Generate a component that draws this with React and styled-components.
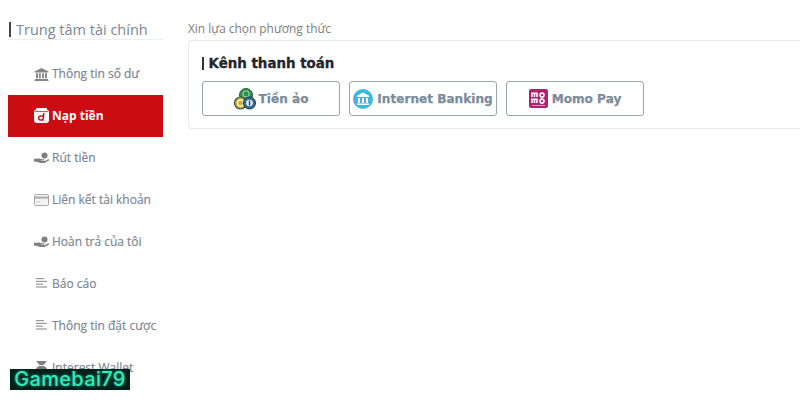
import React from "react";
import styled, { createGlobalStyle } from "styled-components";

const Global = createGlobalStyle`
  html, body { margin: 0; padding: 0; background: #fff; height: 400px; overflow: hidden; }
  body { font-family: "Open Sans", "Noto Sans", sans-serif; }
`;
const Page = styled.div`
  position: relative;
  width: 800px;
  height: 400px;
  overflow: hidden;
  display: flex;
  padding: 19px 0 0 8px;
  box-sizing: border-box;
`;
const Sidebar = styled.aside`
  width: 155px;
  flex: none;
`;
const SideTitle = styled.h2`
  margin: 0 0 13px;
  height: 20px;
  box-sizing: content-box;
  border-bottom: 1px solid #eceef0;
  display: flex;
  align-items: center;
  gap: 5px;
  padding-left: 1px;
  font-size: 14.5px;
  line-height: 19px;
  font-weight: 400;
  color: #7a8793;
  &::before { content: ""; width: 2px; height: 15px; background: #444; }
`;
const Item = styled.div`
  height: 41.9px;
  display: flex;
  align-items: center;
  gap: 3px;
  padding-left: 26px;
  font-size: 12px;
  font-weight: ${p => (p.$active ? 700 : 400)};
  -webkit-text-stroke: ${p => (p.$active ? "0" : "0.2px")};
  white-space: nowrap;
  color: ${p => (p.$active ? "#fff" : "#7d8894")};
  background: ${p => (p.$active ? "#cb0c13" : "transparent")};
  svg { flex: none; }
`;
const Main = styled.main`
  margin-left: 25px;
  padding-top: 1px;
  flex: none;
  width: 640px;
`;
const Label = styled.div`
  height: 20px;
  font-size: 11.9px;
  line-height: 16px;
  color: #7e7e7e;
`;
const Card = styled.section`
  height: 89px;
  box-sizing: border-box;
  border: 1px solid #e9e9e9;
  border-right: none;
  border-radius: 4px 0 0 4px;
  padding: 14px 13px 0;
`;
const CardTitle = styled.h3`
  margin: 0 0 10px;
  height: 16px;
  display: flex;
  align-items: center;
  gap: 5px;
  font-family: "DejaVu Sans", sans-serif;
  font-size: 13.4px;
  font-weight: 700;
  -webkit-text-stroke: 0.3px #22262a;
  color: #22262a;
  &::before { content: ""; width: 1.5px; height: 13px; background: #333; }
`;
const Methods = styled.div`
  display: flex;
  gap: 9px;
`;
const Method = styled.button`
  width: ${p => p.$w}px;
  height: 35px;
  padding: 0;
  box-sizing: border-box;
  display: flex;
  align-items: center;
  justify-content: center;
  gap: ${p => p.$gap ?? 4}px;
  background: #fff;
  border: 1px solid #9aa5ae;
  border-radius: 3px;
  font-family: "DejaVu Sans", sans-serif;
  font-size: 12.1px;
  font-weight: 700;
  -webkit-text-stroke: 0.25px #7b8b9a;
  color: #7b8b9a;
  white-space: nowrap;
`;
const Brand = styled.div`
  position: absolute;
  left: 10px;
  top: 369px;
  width: 120px;
  height: 21px;
  background: #03201b;
  color: #34e8ba;
  font-family: "Inter", sans-serif;
  font-size: 20px;
  line-height: 21px;
  letter-spacing: 0.3px;
  font-weight: 500;
  text-align: center;
  text-shadow: 0 0 3px #14a884;
`;

const Bank = () => (
  <svg width="15" height="14" viewBox="0 0 15 14" fill="#868686">
    <path d="M7.500 1 14.500 4.600V5.500H.5V4.600Z" />
    <path d="M2 6.300h2v5H2zM5 6.300h1.800v5H5zM8.200 6.300H10v5H8.200zM11 6.300h2v5h-2zM1 12h13v1H1zM.5 13h14v1H.5z" />
  </svg>
);
const Wallet = () => (
  <svg width="15" height="15" viewBox="0 0 15 15">
    <rect x="0" y="1.500" width="15" height="13.500" rx="3" fill="#fff" />
    <rect x="2" y="0" width="11" height="2.400" rx="1" fill="#fff" />
    <path d="M1 3.600h13" stroke="#cb0c13" strokeWidth="0.8" />
    <path d="M9.800 5 9 12H6.400a2 2 0 0 1 .3-4h2.500" fill="none" stroke="#cb0c13" strokeWidth="1.500" />
  </svg>
);
const HandCoin = () => (
  <svg width="15" height="12" viewBox="0 0 15 12" fill="#7f7f7f">
    <circle cx="10.500" cy="3.400" r="3" />
    <path d="M0 6.800h2.800C4.500 6.100 6 6.300 7.500 7.300h2.300c.9 0 .9 1.200 0 1.200H7v.4h4l3-1.600c.9-.4 1.500.5.800 1.100L10.500 11H6L3 9.800H0Z" />
  </svg>
);
const CardIcon = () => (
  <svg width="15" height="12" viewBox="0 0 15 12">
    <rect x=".5" y=".5" width="14" height="11" rx="1" fill="#f4f4f4" stroke="#a8a8a8" />
    <rect x="1" y="2.500" width="13" height="2.200" fill="#b0b0b0" />
    <rect x="2.500" y="7.500" width="4" height="1" fill="#c8c8c8" />
  </svg>
);
const Lines = () => (
  <svg width="15" height="10" viewBox="0 0 15 10" fill="#999">
    <rect x="2" y="0" width="8" height="1.200" />
    <rect x="2" y="2.800" width="11" height="1.200" />
    <rect x="2" y="5.600" width="7" height="1.200" />
    <rect x="2" y="8.400" width="11" height="1.200" />
  </svg>
);
const Pot = () => (
  <svg width="15" height="15" viewBox="0 0 15 15" fill="#7f7f7f">
    <path d="M2 1h11L9.500 5h-4Z" />
    <path d="M5 6h5c2.500 1.500 4 3.800 4 6 0 1.500-1 2.500-2.500 2.500h-8C2 14.500 1 13.500 1 12c0-2.200 1.500-4.500 4-6Z" />
  </svg>
);
const Coins = () => (
  <svg width="22" height="22" viewBox="0 0 22 22">
    <circle cx="12" cy="7" r="6.500" fill="#2f8f4e" stroke="#1f5f38" />
    <circle cx="12" cy="6" r="3.200" fill="none" stroke="#a9dcb6" />
    <circle cx="6.500" cy="15" r="6" fill="#c9a938" stroke="#3d5a4a" strokeWidth="1.200" />
    <circle cx="6.500" cy="15" r="3" fill="none" stroke="#fff3c0" strokeWidth="1.300" />
    <circle cx="15.500" cy="15" r="6" fill="#2f6f98" stroke="#234" strokeWidth="1" />
    <circle cx="15.500" cy="15" r="3.300" fill="#e8f1f6" />
    <rect x="14.800" y="12.500" width="1.500" height="5" fill="#234f70" />
  </svg>
);
const BankRound = () => (
  <svg width="20" height="20" viewBox="0 0 20 20">
    <circle cx="10" cy="10" r="10" fill="#3bb9dd" />
    <path d="M10 3.500 16 6.800V8H4V6.800Z" fill="#fff" />
    <path d="M5 9h2v5H5zM9 9h2v5H9zM13 9h2v5h-2zM4 14.500h12V16H4z" fill="#fff" />
  </svg>
);
const Momo = () => (
  <svg width="19" height="19" viewBox="0 0 19 19">
    <rect width="19" height="19" rx="2" fill="#b0216f" />
    <g fill="none" stroke="#fff" strokeWidth="1.600">
      <path d="M3 8V4.200h5V8M5.500 4.200V8" />
      <circle cx="13" cy="6.100" r="2" />
      <path d="M3 14V10.200h5V14M5.500 10.200V14" />
      <circle cx="13" cy="12.100" r="2" />
    </g>
    <rect x="3" y="16" width="13" height="1" fill="#e58fbd" />
  </svg>
);

const items = [
  ["Thông tin số dư", <Bank />],
  ["Nạp tiền", <Wallet />, true],
  ["Rút tiền", <HandCoin />],
  ["Liên kết tài khoản", <CardIcon />],
  ["Hoàn trả của tôi", <HandCoin />],
  ["Báo cáo", <Lines />],
  ["Thông tin đặt cược", <Lines />],
  ["Interest Wallet", <Pot />],
];

export default function App() {
  return (
    <Page>
      <Global />
      <Sidebar>
        <SideTitle>Trung tâm tài chính</SideTitle>
        {items.map(([label, icon, active]) => (
          <Item key={label} $active={active}>
            {icon}
            {label}
          </Item>
        ))}
      </Sidebar>
      <Main>
        <Label>Xin lựa chọn phương thức</Label>
        <Card>
          <CardTitle>Kênh thanh toán</CardTitle>
          <Methods>
            <Method $w={138} $gap={3}><Coins />Tiền ảo</Method>
            <Method $w={148}><BankRound />Internet Banking</Method>
            <Method $w={138}><Momo />Momo Pay</Method>
          </Methods>
        </Card>
      </Main>
      <Brand>Gamebai79</Brand>
    </Page>
  );
}
